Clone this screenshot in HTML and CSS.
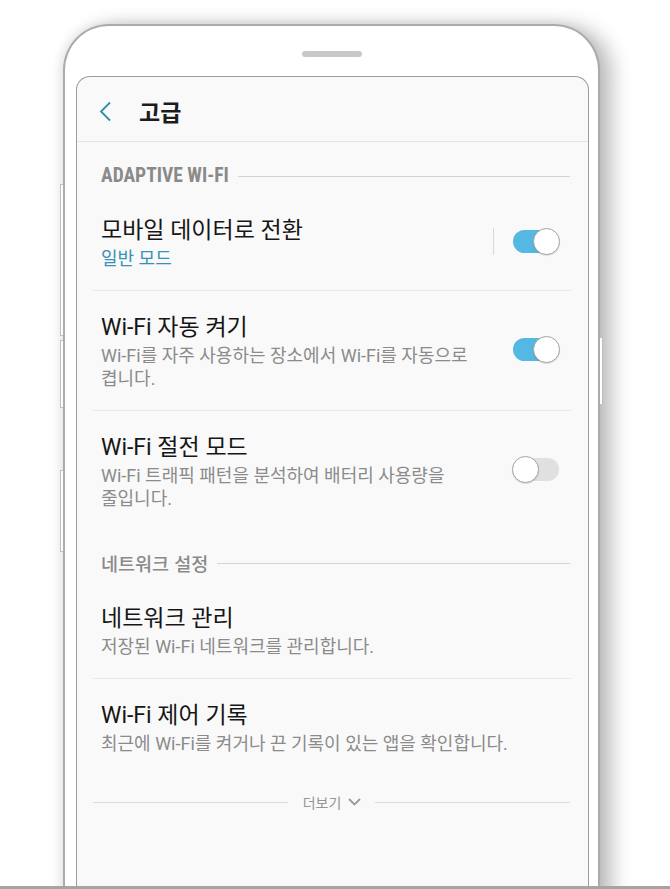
FILE: index.html
```html
<!DOCTYPE html>
<html lang="ko">
<head>
<meta charset="utf-8">
<title>고급</title>
<link rel="stylesheet" href="styles.css">
</head>
<body>
<div class="stage">
  <div class="phone">
    <span class="side-btn side-btn--l1"></span>
    <span class="side-btn side-btn--l2"></span>
    <span class="side-btn side-btn--l3"></span>
    <span class="side-btn side-btn--r1"></span>
    <div class="speaker"></div>
    <div class="screen">
      <div class="appbar">
        <svg class="back" width="13" height="21" viewBox="0 0 13 21"><polyline points="11,1.5 2,10.5 11,19.5" fill="none" stroke="#2f8db0" stroke-width="1.8"/></svg>
        <span class="appbar-title">고급</span>
      </div>
      <div class="list">
        <div class="section section--first">
          <span class="section-title section-title--caps">ADAPTIVE WI-FI</span>
          <span class="section-line"></span>
        </div>
        <div class="item">
          <div class="item-text">
            <div class="item-title">모바일 데이터로 전환</div>
            <div class="item-desc item-desc--accent">일반 모드</div>
          </div>
          <span class="vsep"></span>
          <span class="switch switch--on"><span class="knob"></span></span>
        </div>
        <div class="item">
          <div class="item-text">
            <div class="item-title">Wi-Fi 자동 켜기</div>
            <div class="item-desc">Wi-Fi를 자주 사용하는 장소에서 Wi-Fi를 자동으로<br>켭니다.</div>
          </div>
          <span class="switch switch--on"><span class="knob"></span></span>
        </div>
        <div class="item item--last">
          <div class="item-text">
            <div class="item-title">Wi-Fi 절전 모드</div>
            <div class="item-desc">Wi-Fi 트래픽 패턴을 분석하여 배터리 사용량을<br>줄입니다.</div>
          </div>
          <span class="switch switch--off"><span class="knob"></span></span>
        </div>
        <div class="section section--second">
          <span class="section-title">네트워크 설정</span>
          <span class="section-line"></span>
        </div>
        <div class="item">
          <div class="item-text">
            <div class="item-title">네트워크 관리</div>
            <div class="item-desc">저장된 Wi-Fi 네트워크를 관리합니다.</div>
          </div>
        </div>
        <div class="item item--last">
          <div class="item-text">
            <div class="item-title">Wi-Fi 제어 기록</div>
            <div class="item-desc">최근에 Wi-Fi를 켜거나 끈 기록이 있는 앱을 확인합니다.</div>
          </div>
        </div>
        <div class="more">
          <span class="more-line"></span>
          <span class="more-label">더보기</span>
          <svg class="more-chev" width="13" height="8" viewBox="0 0 13 8"><polyline points="1,1 6.5,6.5 12,1" fill="none" stroke="#9a9a9a" stroke-width="1.8"/></svg>
          <span class="more-line"></span>
        </div>
      </div>
    </div>
  </div>
</div>
<div class="bottom-bar"></div>
</body>
</html>
```
FILE: styles.css
```css
html, body {
  margin: 0;
  padding: 0;
}
body {
  width: 670px;
  height: 889px;
  overflow: hidden;
  background: #ffffff;
  font-family: Roboto, "Noto Sans CJK KR", sans-serif;
}
.stage {
  height: 886px;
  padding: 24px 0 0 63px;
  box-sizing: border-box;
  overflow: hidden;
}
.phone {
  position: relative;
  width: 537px;
  height: 880px;
  box-sizing: border-box;
  border: 2px solid #ababab;
  border-bottom: none;
  border-radius: 46px 46px 0 0;
  background: #ffffff;
  box-shadow: 12px 2px 20px rgba(0, 0, 0, 0.26), -3px 0 12px rgba(0, 0, 0, 0.09);
  display: flex;
  flex-direction: column;
}
.side-btn {
  position: absolute;
  width: 2px;
  background: #ffffff;
  border: 1px solid #c0c0c0;
}
.side-btn--l1 { left: -5px; top: 158px; height: 150px; border-right: none; }
.side-btn--l2 { left: -5px; top: 314px; height: 66px; border-right: none; }
.side-btn--l3 { left: -5px; top: 444px; height: 80px; border-right: none; }
.side-btn--r1 { right: -5px; top: 311px; height: 66px; border-left: none; }
.speaker {
  align-self: center;
  width: 60px;
  height: 6px;
  border-radius: 3px;
  background: #c8c8c8;
  margin: 25px 0 19px;
}
.screen {
  margin-left: 11px;
  width: 513px;
  flex: 1;
  box-sizing: border-box;
  border: 1px solid #9d9d9d;
  border-bottom: none;
  border-radius: 14px 14px 0 0;
  background: #f9f9f9;
}
.appbar {
  height: 65px;
  box-sizing: border-box;
  padding: 4px 0 0 22px;
  display: flex;
  align-items: center;
  border-bottom: 1px solid #e3e3e3;
}
.back {
  display: block;
  flex: none;
}
.appbar-title {
  margin-left: 27px;
  font-family: "Noto Sans CJK KR", sans-serif;
  font-weight: 700;
  font-size: 23px;
  color: #1c1c1c;
}
.list {
  padding: 0 17px 0 16px;
}
.section {
  display: flex;
  align-items: center;
  padding: 22px 1px 8px 8px;
}
.section--first {
  padding-top: 24px;
}
.section--second {
  padding-top: 23px;
  padding-bottom: 9px;
}
.section-title {
  font-family: "Noto Sans CJK KR", sans-serif;
  font-weight: 500;
  font-size: 18.5px;
  line-height: 20px;
  color: #8a8a8a;
}
.section-title--caps {
  font-family: "Liberation Sans Narrow", "Roboto Condensed", "DejaVu Sans Condensed", sans-serif;
  font-weight: 700;
  font-size: 19.5px;
  letter-spacing: 0;
}
.section-line {
  flex: 1;
  height: 1px;
  background: #d3d3d3;
  margin-left: 9px;
}
.item {
  display: flex;
  align-items: center;
  padding: 23px 11px 20px 8px;
  border-bottom: 1px solid #e8e8e8;
}
.item--last {
  border-bottom: none;
}
.item-text {
  flex: 1;
  min-width: 0;
}
.item-title {
  font-size: 23px;
  line-height: 28px;
  color: #161616;
  white-space: nowrap;
}
.item-desc {
  margin-top: 2px;
  font-size: 18px;
  line-height: 23px;
  color: #8b8b8b;
  white-space: nowrap;
}
.item-desc--accent {
  color: #3991b6;
}
.vsep {
  flex: none;
  width: 1px;
  height: 27px;
  background: #d8d8d8;
  margin-right: 18px;
  margin-bottom: 5px;
}
.switch {
  position: relative;
  flex: none;
  width: 48px;
  height: 27px;
  margin-bottom: 5px;
}
.switch::before {
  content: "";
  position: absolute;
  top: 2px;
  height: 23px;
  border-radius: 12px;
}
.switch--on::before {
  left: 1px;
  right: 4px;
  background: #55b8e2;
}
.switch--off::before {
  left: 4px;
  right: 1px;
  background: #e0e0e0;
}
.knob {
  position: absolute;
  top: 0;
  width: 27px;
  height: 27px;
  box-sizing: border-box;
  border-radius: 50%;
  background: #ffffff;
  border: 1.5px solid #a3a3a3;
  box-shadow: 0 1px 1px rgba(0, 0, 0, 0.12);
}
.switch--on .knob { right: 0; }
.switch--off .knob { left: 0; }
.more {
  display: flex;
  align-items: center;
  padding: 17px 1px 0 0;
}
.more-line {
  flex: 1;
  height: 1px;
  background: #dcdcdc;
}
.more-label {
  margin-left: 15px;
  font-family: "Noto Sans CJK KR", sans-serif;
  font-size: 14px;
  line-height: 20px;
  color: #959595;
}
.more-chev {
  display: block;
  margin: 0 14px 0 7px;
}
.bottom-bar {
  height: 3px;
  background: #a5a5a5;
}
```
